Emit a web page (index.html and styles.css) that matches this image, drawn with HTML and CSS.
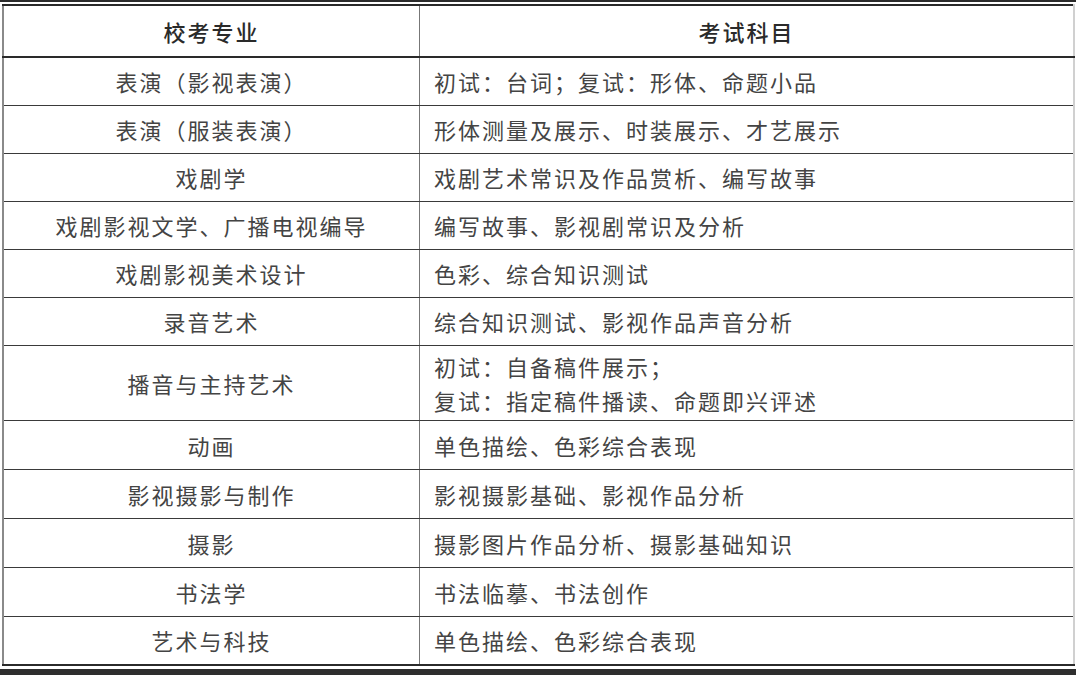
FILE: index.html
```html
<!DOCTYPE html>
<html lang="zh-CN">
<head>
<meta charset="utf-8">
<title>校考专业与考试科目</title>
<link rel="stylesheet" href="styles.css">
</head>
<body>
<div class="page">
  <div class="strip-top"></div>
  <table class="exam">
    <thead>
      <tr class="head">
        <th class="major">校考专业</th>
        <th class="subject">考试科目</th>
      </tr>
    </thead>
    <tbody>
      <tr class="r48"><td class="major">表演（影视表演）</td><td class="subject">初试：台词；复试：形体、命题小品</td></tr>
      <tr class="r48"><td class="major">表演（服装表演）</td><td class="subject">形体测量及展示、时装展示、才艺展示</td></tr>
      <tr class="r48"><td class="major">戏剧学</td><td class="subject">戏剧艺术常识及作品赏析、编写故事</td></tr>
      <tr class="r48"><td class="major">戏剧影视文学、广播电视编导</td><td class="subject">编写故事、影视剧常识及分析</td></tr>
      <tr class="r48"><td class="major">戏剧影视美术设计</td><td class="subject">色彩、综合知识测试</td></tr>
      <tr class="r48"><td class="major">录音艺术</td><td class="subject">综合知识测试、影视作品声音分析</td></tr>
      <tr class="r75"><td class="major">播音与主持艺术</td><td class="subject"><div class="line">初试：自备稿件展示；</div><div class="line">复试：指定稿件播读、命题即兴评述</div></td></tr>
      <tr class="r49"><td class="major">动画</td><td class="subject">单色描绘、色彩综合表现</td></tr>
      <tr class="r49"><td class="major">影视摄影与制作</td><td class="subject">影视摄影基础、影视作品分析</td></tr>
      <tr class="r49"><td class="major">摄影</td><td class="subject">摄影图片作品分析、摄影基础知识</td></tr>
      <tr class="r49"><td class="major">书法学</td><td class="subject">书法临摹、书法创作</td></tr>
      <tr class="r49"><td class="major">艺术与科技</td><td class="subject">单色描绘、色彩综合表现</td></tr>
    </tbody>
  </table>
  <div class="strip-bottom"></div>
</div>
</body>
</html>
```

FILE: styles.css
```css
html, body {
  margin: 0;
  padding: 0;
  background: #ffffff;
}

body {
  font-family: "Noto Sans CJK SC", "Noto Sans", sans-serif;
  color: #444444;
  width: 1076px;
  height: 676px;
  overflow: hidden;
}

.page {
  display: block;
  width: 1076px;
  height: 676px;
  overflow: hidden;
}

.strip-top {
  height: 2px;
  background: #2b2b2b;
  margin-bottom: 2px;
}

.exam {
  border-collapse: collapse;
  width: 1073px;
  margin-left: 2px;
  table-layout: fixed;
  border-top: 2px solid #2a2a2a;
  border-left: 2px solid #8a8a8a;
  border-right: 2px solid #d0d0d0;
  border-bottom: 2px solid #2a2a2a;
}

.exam th,
.exam td {
  padding: 0;
  vertical-align: middle;
  font-size: 22px;
  letter-spacing: 2px;
  line-height: 34px;
  border-bottom: 1px solid #3a3a3a;
}

.exam th {
  font-weight: 500;
  color: #2a2a2a;
  text-align: center;
  border-bottom: 2px solid #2a2a2a;
}

.exam .major {
  width: 415px;
  text-align: center;
  font-weight: 400;
  border-right: 1px solid #777777;
}

.exam th.major {
  font-weight: 500;
}

.exam td.subject {
  text-align: left;
  font-weight: 400;
  padding-left: 14px;
}

.exam th.subject {
  text-align: center;
}

.head { height: 52px; }
.r48 { height: 48px; }
.r75 { height: 75px; }
.r49 { height: 49px; }

.line {
  line-height: 34px;
}

.strip-bottom {
  height: 6px;
  margin-top: 3px;
  background: #2e2e2e;
}
```
